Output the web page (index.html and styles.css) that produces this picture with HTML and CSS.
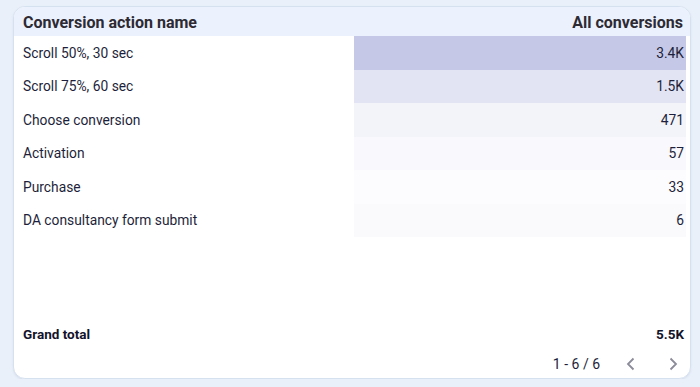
FILE: index.html
```html
<!DOCTYPE html>
<html lang="en">
<head>
    <meta charset="UTF-8">
    <meta name="viewport" content="width=device-width, initial-scale=1.0">
    <title>Conversions</title>
    <link rel="stylesheet" href="styles.css">
</head>
<body>
    <div class="card">
        <div class="table-head">
            <div class="cell">Conversion action name</div>
            <div class="cell num">All conversions</div>
        </div>

        <div class="table-body">
            <div class="row">
                <div class="cell">Scroll 50%, 30 sec</div>
                <div class="cell num heat-1">3.4K</div>
            </div>
            <div class="row">
                <div class="cell">Scroll 75%, 60 sec</div>
                <div class="cell num heat-2">1.5K</div>
            </div>
            <div class="row">
                <div class="cell">Choose conversion</div>
                <div class="cell num heat-3">471</div>
            </div>
            <div class="row">
                <div class="cell">Activation</div>
                <div class="cell num heat-4">57</div>
            </div>
            <div class="row">
                <div class="cell">Purchase</div>
                <div class="cell num heat-5">33</div>
            </div>
            <div class="row">
                <div class="cell">DA consultancy form submit</div>
                <div class="cell num heat-6">6</div>
            </div>
        </div>

        <div class="row total">
            <div class="cell">Grand total</div>
            <div class="cell num">5.5K</div>
        </div>

        <div class="pager">
            <span class="pager-range">1 - 6 / 6</span>
            <button class="pager-btn" aria-label="Previous page">
                <svg width="16" height="16" viewBox="0 0 16 16"><path d="M10.5 2.5 L5 8 L10.5 13.5" fill="none" stroke="currentColor" stroke-width="1.8"/></svg>
            </button>
            <button class="pager-btn" aria-label="Next page">
                <svg width="16" height="16" viewBox="0 0 16 16"><path d="M5.5 2.5 L11 8 L5.5 13.5" fill="none" stroke="currentColor" stroke-width="1.8"/></svg>
            </button>
        </div>
    </div>
</body>
</html>
```

FILE: styles.css
```css
:root {
    --page-bg: #e9f0fa;
    --head-bg: #ebf2fd;
    --border: #d6e1ef;
    --text-head: #2d2a33;
    --text-body: #1e1f3a;
    --text-muted: #8b8b99;
}

* {
    margin: 0;
    padding: 0;
    box-sizing: border-box;
}

body {
    font-family: Roboto, "Liberation Sans", sans-serif;
    background: var(--page-bg);
    padding: 6px 9px 0 13px;
}

.card {
    width: 678px;
    height: 373px;
    background: #fff;
    border: 1px solid var(--border);
    border-radius: 12px;
    box-shadow: 0 1px 2px rgba(120, 140, 170, 0.15);
    overflow: hidden;
    display: flex;
    flex-direction: column;
}

.table-head,
.row {
    display: grid;
    grid-template-columns: 340px 332px;
}

.table-head {
    height: 29px;
    padding-top: 1px;
    background: var(--head-bg);
    color: var(--text-head);
    font-size: 16px;
    font-weight: bold;
    grid-template-columns: 340px 331px;
}

.cell {
    display: flex;
    align-items: center;
    padding-left: 9px;
}

.cell.num {
    justify-content: flex-end;
    padding-left: 0;
    padding-right: 2px;
}

.table-body {
    flex: 1;
}

.row {
    height: 33.5px;
    font-size: 13.8px;
    color: var(--text-body);
}

.heat-1 { background: #c5c8e6; }
.heat-2 { background: #e3e4f3; }
.heat-3 { background: #f3f4fa; }
.heat-4 { background: #f9f9fd; }
.heat-5 { background: #fcfcfe; }
.heat-6 { background: #fafafd; }

.row.total {
    height: 30px;
    font-weight: bold;
    font-size: 13.5px;
    color: #13132b;
}

.pager {
    height: 29px;
    display: flex;
    align-items: center;
    justify-content: flex-end;
    padding-right: 9px;
    color: var(--text-body);
    font-size: 14px;
}

.pager-range {
    margin-right: 23px;
}

.pager-btn {
    border: none;
    background: none;
    color: var(--text-muted);
    width: 16px;
    height: 16px;
    margin-left: 26px;
    display: flex;
}

.pager-btn:first-of-type {
    margin-left: 0;
}
```
